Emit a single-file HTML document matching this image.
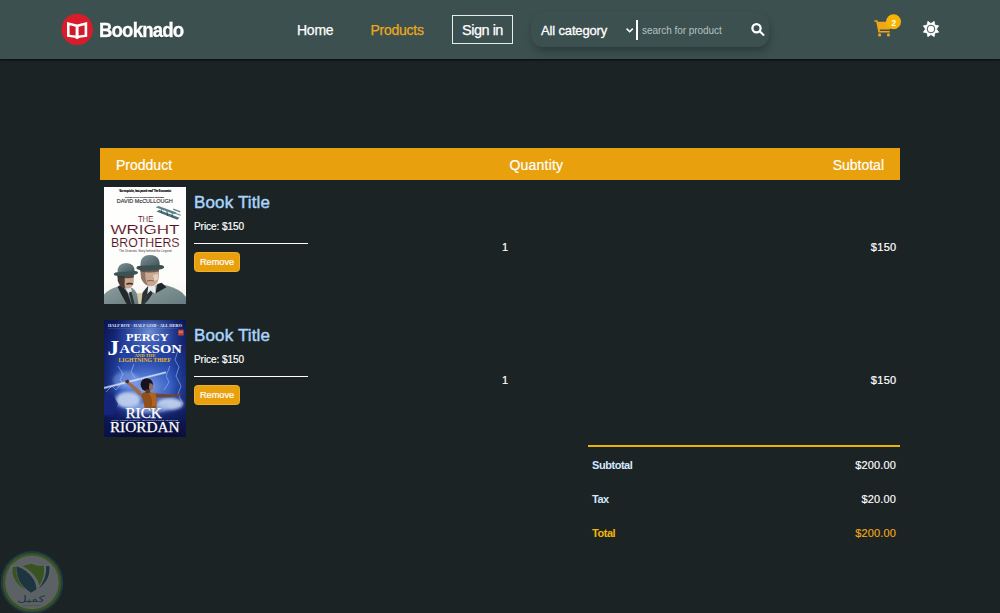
<!DOCTYPE html>
<html lang="en">
<head>
<meta charset="utf-8">
<title>Booknado - Cart</title>
<style>
*{box-sizing:border-box;margin:0;padding:0}
html,body{width:1000px;height:613px;overflow:hidden}
body{background:#1b2325;font-family:"Liberation Sans",sans-serif;color:#fff;position:relative}
.abs{position:absolute;white-space:nowrap;line-height:1}
svg{position:absolute;display:block;overflow:visible}
nav{position:absolute;left:0;top:0;width:1000px;height:59px;background:#3c5050;box-shadow:0 1px 2px rgba(0,0,0,.75)}
.brand{left:99.3px;top:20px;-webkit-text-stroke:.35px #fff;font-size:20px;font-weight:700;letter-spacing:-0.9px;transform:scaleX(.93);transform-origin:0 0;color:#fff;text-shadow:0 1px 1px rgba(0,0,0,.45)}
.nl{font-size:14px;top:23px;color:#fff;letter-spacing:-.25px;-webkit-text-stroke:.25px currentColor}
.signin{position:absolute;left:452px;top:15px;width:61px;height:29px;border:1px solid #e6eded;font-size:14.5px;letter-spacing:-.5px;line-height:28px;text-align:center;color:#fff;-webkit-text-stroke:.25px #fff}
.search{position:absolute;left:531px;top:12px;width:238px;height:35px;border-radius:12px;background:#3c5050;box-shadow:1px 5px 8px -1px rgba(0,0,0,.28)}
.cat{left:541px;top:24px;font-size:13px;letter-spacing:-.15px;color:#fff;-webkit-text-stroke:.3px #fff}
.vdiv{position:absolute;left:635.7px;top:20px;width:2px;height:20px;background:#fff}
.ph{left:642px;top:26px;font-size:10px;color:#b4c1c1;letter-spacing:-.05px}
.thead{position:absolute;left:100px;top:148px;width:800px;height:32px;background:#e8a10d}
.th{font-size:14px;top:9.6px;color:#fff;-webkit-text-stroke:.2px #fff}
.title{font-size:17px;letter-spacing:.15px;color:#a9d4fb;-webkit-text-stroke:.45px #a9d4fb}
.price{font-size:10px;margin-top:-.4px;color:#fff;letter-spacing:-.05px;-webkit-text-stroke:.2px #fff}
.hr{position:absolute;left:194px;width:114px;height:1px;background:#fff}
.btn{position:absolute;left:194px;width:46px;height:20px;border-radius:3.5px;background:#e8a10d;border:1px solid #efb02c;font-size:9.2px;line-height:18px;text-align:center;color:#fff;-webkit-text-stroke:.2px #fff}
.cell{font-size:11px;margin-top:0;transform:translateY(.6px);-webkit-text-stroke:.2px #fff;color:#fff;letter-spacing:.3px}
.cover{left:104px;width:82px;height:117px}
.sline{position:absolute;left:588px;top:445px;width:312px;height:2px;background:#f0b106}
.sl{font-size:11px;font-weight:700;margin-top:0;letter-spacing:-.45px;color:#d4e8fd}
.sr{font-size:11px;margin-top:.4px;color:#fff;right:104px;letter-spacing:.15px;-webkit-text-stroke:.15px currentColor}
</style>
</head>
<body>
<nav>
  <svg style="left:61px;top:13px" width="32" height="32" viewBox="61 13 32 32">
    <circle cx="77.2" cy="29.4" r="15.7" fill="#d91c2b"/>
    <path d="M67 22 L77.1 24.6 L87.2 22 L87.2 36.8 L79.6 37.7 L77.1 39.3 L74.6 37.7 L67 36.8 Z" fill="#fff"/>
    <path d="M69.6 25.2 L75.6 26.8 L75.6 35.6 L69.6 34.8 Z M84.6 25.2 L78.6 26.8 L78.6 35.6 L84.6 34.8 Z" fill="#cf1a29"/>
  </svg>
  <div class="abs brand">Booknado</div>
  <div class="abs nl" style="left:297px">Home</div>
  <div class="abs nl" style="left:370.5px;color:#eaa91a">Products</div>
  <div class="signin">Sign in</div>
  <div class="search"></div>
  <div class="abs cat">All category</div>
  <svg style="left:626px;top:28px" width="8" height="5" viewBox="0 0 8 5"><path d="M0.6 0.6 L3.7 3.7 L6.8 0.6" fill="none" stroke="#fff" stroke-width="1.6"/></svg>
  <div class="vdiv"></div>
  <div class="abs ph">search for product</div>
  <svg style="left:749px;top:22px" width="17" height="15" viewBox="749 22 17 15">
    <circle cx="756.5" cy="28.2" r="4.1" fill="none" stroke="#fff" stroke-width="2.3"/>
    <path d="M760 31.6 L763.5 34.9" stroke="#fff" stroke-width="2.1" stroke-linecap="round"/>
  </svg>
  <!-- cart -->
  <svg style="left:873px;top:13px" width="30" height="25" viewBox="873 13 30 25">
    <path d="M874.4 20.2 H877.3 L878 21.8 H891.6 L889.9 29.4 H879.6 L879.9 31 H889.8 V32.6 H878.4 L876.2 21.8 H874.4 Z" fill="#efa716"/>
    <circle cx="879.6" cy="34.9" r="1.55" fill="#efa716"/>
    <circle cx="888.4" cy="34.9" r="1.55" fill="#efa716"/>
    <circle cx="893.5" cy="21.8" r="7.5" fill="#f6b404"/>
    <text x="893.7" y="25.6" font-family="Liberation Sans, sans-serif" font-size="9.8" font-weight="700" fill="#fff" text-anchor="middle" textLength="4.6" lengthAdjust="spacingAndGlyphs">2</text>
  </svg>
  <!-- sun -->
  <svg style="left:922px;top:20px" width="18" height="18" viewBox="-9 -9 18 18">
    <polygon points="3.18,-7.67 3.89,-3.89 7.67,-3.18 5.50,0.00 7.67,3.18 3.89,3.89 3.18,7.67 0.00,5.50 -3.18,7.67 -3.89,3.89 -7.67,3.18 -5.50,0.00 -7.67,-3.18 -3.89,-3.89 -3.18,-7.67 -0.00,-5.50" fill="#fff" stroke="#fff" stroke-width=".7" stroke-linejoin="round"/>
    <circle cx="0" cy="0" r="3.8" fill="none" stroke="#2c3f42" stroke-width=".9"/>
  </svg>
</nav>

<div class="thead">
  <div class="abs th" style="left:16px">Prodduct</div>
  <div class="abs th" style="left:409.5px;letter-spacing:.2px">Quantity</div>
  <div class="abs th" style="right:16px">Subtotal</div>
</div>

<!-- row 1 -->
<!--C1S--><svg class="cover" style="top:187px" width="82" height="117" viewBox="0 0 82 117">
  <defs>
    <linearGradient id="c1bg" x1="0" y1="0" x2="0" y2="1">
      <stop offset="0" stop-color="#fefefe"/><stop offset=".8" stop-color="#fdfdfb"/><stop offset="1" stop-color="#f3f0e6"/>
    </linearGradient>
    <linearGradient id="c1hat" x1="0" y1="0" x2="1" y2="1">
      <stop offset="0" stop-color="#7d9497"/><stop offset="1" stop-color="#3f5358"/>
    </linearGradient>
    <linearGradient id="c1coat" x1="0" y1="0" x2="1" y2="1">
      <stop offset="0" stop-color="#8b9d9e"/><stop offset="1" stop-color="#687b7e"/>
    </linearGradient>
    <clipPath id="c1clip"><rect width="82" height="117"/></clipPath>
  </defs>
  <g clip-path="url(#c1clip)" font-family="Liberation Sans, sans-serif">
    <rect width="82" height="117" fill="url(#c1bg)"/>
    <text x="41" y="5.3" font-size="2.6" font-weight="700" fill="#111" stroke="#111" stroke-width=".2" text-anchor="middle" textLength="52" lengthAdjust="spacingAndGlyphs">‘An exquisite, fast-paced read’ The Economist</text>
    <text x="40.5" y="10.5" font-size="2.4" font-weight="700" fill="#333" stroke="#333" stroke-width=".15" text-anchor="middle" textLength="39" lengthAdjust="spacingAndGlyphs">DOUBLE PULITZER PRIZE WINNER</text>
    <text x="12.8" y="15.6" font-size="5.3" fill="#2a2a2c" stroke="#2a2a2c" stroke-width=".12" textLength="56" lengthAdjust="spacingAndGlyphs">DAVID McCULLOUGH</text>
    <!-- biplane -->
    <g fill="#5c8388">
      <path d="M51.5 20.2 L54.5 19 L72.5 25.6 L70.5 27.2 Z"/>
      <path d="M52.5 24.4 L55.2 23 L75.5 30.8 L73.2 32.8 Z" fill="#4c7076"/>
      <path d="M69.5 21.6 L76.5 24.2 L76 25.4 L69 22.8 Z"/>
      <path d="M70.5 25.4 L77 27.8 L76.6 28.8 L70 26.6 Z" fill="#6b9197"/>
      <path d="M62.5 24 L63.3 24 L64 29 L63.2 29 Z M57 22 L57.6 22 L58.4 26.6 L57.8 26.6 Z M67.5 25.5 L68.2 25.5 L69 30.6 L68.3 30.6 Z" fill="#2f4a50"/>
    </g>
    <g fill="#571122" stroke="#fdfdfb" stroke-width=".1">
      <text x="33.9" y="34.5" font-size="8.8" textLength="15.4" lengthAdjust="spacingAndGlyphs">THE</text>
      <text x="6.5" y="46.5" font-size="13.5" textLength="69" lengthAdjust="spacingAndGlyphs">WRIGHT</text>
      <text x="7.1" y="59.6" font-size="13.5" textLength="68.5" lengthAdjust="spacingAndGlyphs">BROTHERS</text>
    </g>
    <text x="41.3" y="64.7" font-size="2.7" fill="#3a3a3a" text-anchor="middle" textLength="52.5" lengthAdjust="spacingAndGlyphs">The Dramatic Story behind the Legend</text>
    <!-- ground tint -->
    <path d="M28 117 L30 108 Q36 104 42 108 L42 117 Z" fill="#c9b88e" opacity=".75"/>
    <!-- left man -->
    <path d="M0 117 L0 107.5 Q5 102 13.5 99.8 L26 100 Q31 102 33 107 L34.5 117 Z" fill="url(#c1coat)"/>
    <path d="M13.5 99.8 L17 97.6 L23.4 105.5 L27.4 117 L22.6 117 L17.4 107.5 Z" fill="#22282b"/>
    <path d="M20.5 99.6 L26.4 99.6 L28 104.6 L24.4 106.6 Z" fill="#e6e9ea"/>
    <path d="M25 105.4 L27.4 104.4 L30.6 117 L27.8 117 Z" fill="#2b3336"/>
    <path d="M13.6 88 L29.8 88 L29.8 95 Q28.6 101.6 23 101.6 Q16.4 101.2 13.8 94 Z" fill="#c6a58e"/>
    <path d="M13.6 88 L20.5 88 L20.8 94 Q20 99 21.6 101.4 Q16 100.6 13.8 94 Z" fill="#4b3b35"/>
    <path d="M13.6 87.6 L29.8 87.6 L29.8 90.4 Q22 92 13.6 90.6 Z" fill="#3b302d" opacity=".8"/>
    <path d="M22.2 96.4 Q25.6 95.2 29.2 96.6 L29 97.8 Q25.6 96.8 22.4 97.8 Z" fill="#33261f"/>
    <path d="M13.6 86 Q13 76 22.2 76 Q31.2 76.2 30.8 85.4 Z" fill="url(#c1hat)"/>
    <path d="M9.8 87.4 Q10 85 14 85.2 L31 84 Q34.2 84.2 34 86 Q33 88.2 22 88.8 Q11 89.6 9.8 87.4 Z" fill="#3a5256"/>
    <!-- right man -->
    <path d="M37 117 L38.4 106 Q41 100.5 46.4 98.4 L58 97.2 Q70 99.6 78 105.4 L82 110 L82 117 Z" fill="url(#c1coat)"/>
    <path d="M53.4 97 L57.6 95.8 L62.4 100.2 L51.4 106.4 Z" fill="#1f2528"/>
    <path d="M44 99 L46.6 98 L43 108 L39.6 117 L37.4 117 L38.6 106 Z" fill="#2a3134"/>
    <path d="M44.2 99 L51.6 98 L51.4 106.4 L47 104 L43.4 107 Z" fill="#e9ecee"/>
    <path d="M43.4 107 L46.6 103.6 L48.6 106.4 L45 112 L40.6 117 L39.6 117 Z" fill="#283033"/>
    <path d="M36.4 82 L55 82 L55 91 Q53 99.2 46.8 99.2 Q40 99 37 91 Z" fill="#c8a891"/>
    <path d="M36.4 82 L41 82 L41.4 90 Q42 96 44.4 98.8 Q39.4 97 37 91 Z" fill="#8a6c5c" opacity=".85"/>
    <path d="M36.4 81.6 L55 81.6 L55 84.4 Q46 86.6 36.4 84.6 Z" fill="#4e3f3a" opacity=".75"/>
    <path d="M49 88 L54 87 L54.4 92 L50.6 94 Z" fill="#ecd9cc" opacity=".8"/>
    <path d="M43 94 Q46.4 93 49.8 94" stroke="#5a4036" stroke-width=".7" fill="none"/>
    <path d="M36.6 79.6 Q35.6 68 46 68 Q56.6 68.2 55.6 79.4 Z" fill="url(#c1hat)"/>
    <path d="M32.4 81.2 Q32.4 78.6 37 78.8 L56 78 Q60.4 78.4 60.2 80.4 Q58.6 83 46 83.6 Q33.6 84 32.4 81.2 Z" fill="#39504f"/>
  </g>
</svg><!--C1E-->
<div class="abs title" style="left:194px;top:194px">Book Title</div>
<div class="abs price" style="left:194px;top:222px">Price: $150</div>
<div class="hr" style="top:243px"></div>
<div class="btn" style="top:252px">Remove</div>
<div class="abs cell" style="left:502px;top:241px">1</div>
<div class="abs cell" style="right:103.5px;top:241px">$150</div>

<!-- row 2 -->
<!--C2S--><svg class="cover" style="top:320px" width="82" height="117" viewBox="0 0 82 117">
  <defs>
    <linearGradient id="c2bg" x1="0" y1="0" x2="0" y2="1">
      <stop offset="0" stop-color="#0c1858"/><stop offset=".09" stop-color="#15277c"/><stop offset=".3" stop-color="#2140a2"/><stop offset=".55" stop-color="#2a54be"/><stop offset=".68" stop-color="#2546a6"/><stop offset=".78" stop-color="#182878"/><stop offset=".9" stop-color="#0c1448"/><stop offset="1" stop-color="#080b30"/>
    </linearGradient>
    <radialGradient id="c2glow" cx=".55" cy=".2" r=".45">
      <stop offset="0" stop-color="#7fa2e8" stop-opacity=".85"/><stop offset="1" stop-color="#3a63c8" stop-opacity="0"/>
    </radialGradient>
    <radialGradient id="c2glow2" cx=".5" cy=".55" r=".5">
      <stop offset="0" stop-color="#9dbdf6" stop-opacity=".85"/><stop offset="1" stop-color="#3a63c8" stop-opacity="0"/>
    </radialGradient>
    <linearGradient id="c2edge" x1="0" y1="0" x2="1" y2="0">
      <stop offset="0" stop-color="#0a1450" stop-opacity=".75"/><stop offset=".22" stop-color="#0a1450" stop-opacity="0"/><stop offset=".8" stop-color="#0a1450" stop-opacity="0"/><stop offset="1" stop-color="#0a1450" stop-opacity=".55"/>
    </linearGradient>
    <filter id="c2blur" x="-20%" y="-20%" width="140%" height="140%"><feGaussianBlur stdDeviation="1.6"/></filter>
    <filter id="c2blur2" x="-20%" y="-50%" width="140%" height="200%"><feGaussianBlur stdDeviation=".7"/></filter>
    <clipPath id="c2clip"><rect width="82" height="117"/></clipPath>
  </defs>
  <g clip-path="url(#c2clip)" font-family="Liberation Serif, serif">
    <rect width="82" height="117" fill="url(#c2bg)"/>
    <rect width="82" height="60" fill="url(#c2glow)"/>
    <rect y="30" width="82" height="70" fill="url(#c2glow2)"/>
    <rect width="82" height="117" fill="url(#c2edge)"/>
    <!-- clouds -->
    <g filter="url(#c2blur)">
      <ellipse cx="24" cy="80" rx="12" ry="8" fill="#c6d6f2" opacity=".9"/>
      <ellipse cx="66" cy="84" rx="13" ry="6" fill="#c9d8f4" opacity=".9"/>
      <ellipse cx="44" cy="88" rx="22" ry="5" fill="#9fb6e6" opacity=".7"/>
      <ellipse cx="6" cy="84" rx="7" ry="12" fill="#15247a" opacity=".8"/>
    </g>
    <ellipse cx="22" cy="60" rx="13" ry="9" fill="#a8c4f8" opacity=".35" filter="url(#c2blur)"/>
    <path d="M0 78 L5 74 L10 77 L14 84 L10 92 L0 96 Z" fill="#16267c" opacity=".85" filter="url(#c2blur2)"/>
    <!-- lightning -->
    <g fill="none" stroke="#b9d2ff" stroke-width=".55" opacity=".9">
      <path d="M74 30 L71 40 L75 47 L72 56 L77 66 L74 74 L79 84"/>
      <path d="M66 46 L62 56 L65 62 L60 70"/>
      <path d="M14 46 L19 54 L16 60 L22 66"/>
      <path d="M2 72 L8 66 L12 70 L18 62"/>
      <path d="M30 44 L27 52 L31 58"/>
    </g>
    <!-- bolt -->
    <path d="M0 68 L62 52.3" stroke="#dfeaff" stroke-width="2.4" opacity=".45" filter="url(#c2blur2)"/>
    <path d="M0 68 L62 52.3" stroke="#f4f6ff" stroke-width=".75" opacity=".9"/>
    <!-- boy -->
    <path d="M37.6 76.5 L34.6 75 L22.2 62.6 L24.2 60.8 L37 71.6 Z" fill="#9c6a4a"/>
    <path d="M21.4 60.4 L24 59.6 L25.4 61.6 L23.4 63.6 L21.2 62.6 Z" fill="#4a2c24"/>
    <path d="M51 73.6 L66 74.6 L76.6 74 L76.8 75.8 L66 77.2 L51.4 77.4 Z" fill="#6e4634"/>
    <path d="M37.3 74 Q40 71.6 44 72.2 L51.6 73.2 Q53.4 80 52.4 88.4 L40.6 88.4 Q39.6 80 37.3 76.4 Z" fill="#91501a"/>
    <path d="M44 72.4 L51.6 73.2 Q53 79 52.4 86 L48 86 Q49 78 44 72.4 Z" fill="#b8681e" opacity=".8"/>
    <ellipse cx="42.8" cy="64.6" rx="6.2" ry="6.4" fill="#17121c"/>
    <path d="M45.6 63 Q49.4 63.4 49.2 67 Q48.6 70.6 45.4 70.6 Q44.4 67 45.6 63 Z" fill="#9a6a52"/>
    <path d="M41.6 69.6 L46 69.6 L46.4 73 L41.4 73 Z" fill="#5a3a2c"/>
    <!-- top strap -->
    <text x="41" y="7.4" font-size="4" font-weight="700" fill="#e4ecff" text-anchor="middle" textLength="74" lengthAdjust="spacingAndGlyphs">HALF BOY · HALF GOD · ALL HERO</text>
    <rect x="4" y="8.7" width="70" height=".35" fill="#8fa8e0" opacity=".6"/>
    <rect x="74.2" y="9.7" width="5.4" height="5.8" fill="#c4452c"/>
    <rect x="74.8" y="11.6" width="4.2" height=".8" fill="#f0d0b0" opacity=".8"/>
    <g fill="#fff" font-weight="700">
      <text x="21.9" y="20.6" font-size="10.4" textLength="42.8" lengthAdjust="spacingAndGlyphs">PERCY</text>
      <text x="3.4" y="34.7" font-size="21" textLength="11.7" lengthAdjust="spacingAndGlyphs">J</text>
      <text x="15.4" y="32.5" font-size="12.9" textLength="62.5" lengthAdjust="spacingAndGlyphs">ACKSON</text>
    </g>
    <g fill="#eab91e" font-weight="700">
      <text x="41" y="37.2" font-size="3.6" text-anchor="middle" textLength="21" lengthAdjust="spacingAndGlyphs">AND THE</text>
      <text x="40.8" y="41.9" font-size="5.1" text-anchor="middle" textLength="52.5" lengthAdjust="spacingAndGlyphs">LIGHTNING THIEF</text>
    </g>
    <g fill="#fff">
      <text x="21.4" y="97.9" font-size="13.8" textLength="36.5" lengthAdjust="spacingAndGlyphs" stroke="#fff" stroke-width=".25">RICK</text>
      <text x="40.7" y="100.9" font-size="2.4" font-weight="700" fill="#d8e2ff" text-anchor="middle" textLength="67" lengthAdjust="spacingAndGlyphs">NEW YORK TIMES · BESTSELLING AUTHOR</text>
      <text x="5.9" y="112.4" font-size="15" textLength="69.7" lengthAdjust="spacingAndGlyphs" stroke="#fff" stroke-width=".25">RIORDAN</text>
    </g>
  </g>
</svg><!--C2E-->
<div class="abs title" style="left:194px;top:327px">Book Title</div>
<div class="abs price" style="left:194px;top:355px">Price: $150</div>
<div class="hr" style="top:376px"></div>
<div class="btn" style="top:385px">Remove</div>
<div class="abs cell" style="left:502px;top:374px">1</div>
<div class="abs cell" style="right:103.5px;top:374px">$150</div>

<div class="sline"></div>
<div class="abs sl" style="left:592px;top:460px">Subtotal</div>
<div class="abs sr" style="top:460px">$200.00</div>
<div class="abs sl" style="left:592px;top:494px">Tax</div>
<div class="abs sr" style="top:494px">$20.00</div>
<div class="abs sl" style="left:592px;top:528px;color:#f3b50a">Total</div>
<div class="abs sr" style="top:528px;color:#eda81a">$200.00</div>
<!--WMS--><svg style="left:0;top:551px" width="64" height="62" viewBox="0 551 64 62">
  <defs><clipPath id="wmclip"><rect x="0" y="551" width="64" height="62"/></clipPath></defs>
  <g clip-path="url(#wmclip)" opacity=".3"><g transform="translate(32 582.4) scale(1.035) translate(-32 -583)">
    <circle cx="32" cy="583" r="30.3" fill="#2a6a8a"/>
    <circle cx="32" cy="583" r="28.4" fill="#80c41c"/>
    <circle cx="32" cy="583" r="25.9" fill="#eef0f8"/>
    <g transform="translate(31 563.4) scale(1.1 .9) translate(-32 -563)"><path d="M32 563 Q24 566.5 14 566.5 Q12.5 584 32 596.5 Q51.5 584 50 566.5 Q40 566.5 32 563 Z" fill="#fff"/>
    <path d="M16 568 Q13.5 582 27 593 Q17.5 581 19.5 568 Z" fill="#7cc01c"/>
    <path d="M19.5 567.5 Q29 571 34.5 582 Q37 588.5 36.8 592.5 L32 596 Q22 588 20.2 578 Q19.2 572 19.5 567.5 Z" fill="#22607c"/>
    <path d="M24.5 566.8 Q30 565.6 32 564.4 Q36 566.6 43.5 567 Q44.2 580 39.5 588 Q38 577 24.5 566.8 Z" fill="#7cc01c"/>
    <path d="M45.4 567.2 L48.2 567.2 Q49.4 582 38.6 591.4 Q46 581 45.4 567.2 Z" fill="#22607c"/></g>
    <text x="31" y="602.2" font-family="DejaVu Sans, sans-serif" font-size="8.5" font-weight="400" textLength="27" lengthAdjust="spacingAndGlyphs" fill="#22607c" text-anchor="middle" direction="rtl">كفيل</text>
    <rect x="22" y="605" width="18" height=".8" fill="#7fc21e" opacity=".5"/>
  </g></g>
</svg><!--WME-->
</body>
</html>
